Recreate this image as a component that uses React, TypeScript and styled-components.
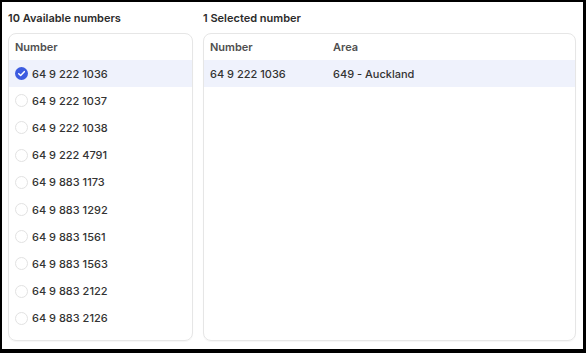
import styled, { createGlobalStyle } from "styled-components";

const GlobalStyle = createGlobalStyle`
  html, body {
    margin: 0;
    padding: 0;
    background: #ffffff;
  }
  body {
    font-family: Inter, "Noto Sans", sans-serif;
  }
`;

const available = [
  "64 9 222 1036",
  "64 9 222 1037",
  "64 9 222 1038",
  "64 9 222 4791",
  "64 9 883 1173",
  "64 9 883 1292",
  "64 9 883 1561",
  "64 9 883 1563",
  "64 9 883 2122",
  "64 9 883 2126",
];

const selected = [{ number: "64 9 222 1036", area: "649 - Auckland" }];

const Check = ({ checked }: { checked: boolean }) =>
  checked ? (
    <Tick viewBox="0 0 14 14">
      <circle cx="7" cy="7" r="7" fill="#3d5ce0" />
      <path d="M4 7.2 L6.1 9.2 L10 5" fill="none" stroke="#fff" strokeWidth="1.6" strokeLinecap="round" strokeLinejoin="round" />
    </Tick>
  ) : (
    <Radio />
  );

export default function App() {
  return (
    <>
      <GlobalStyle />
      <Frame>
        <Column $width="185px">
          <Title>{available.length} Available numbers</Title>
          <Card>
            <HeadRow>
              <HeadCell>Number</HeadCell>
            </HeadRow>
            {available.map((n, i) => (
              <Row key={n} $active={i === 0} $gap="4px">
                <Check checked={i === 0} />
                <Cell>{n}</Cell>
              </Row>
            ))}
          </Card>
        </Column>
        <Column $width="373px">
          <Title>{selected.length} Selected number</Title>
          <Card>
            <HeadRow>
              <HeadCell $width="123px">Number</HeadCell>
              <HeadCell>Area</HeadCell>
            </HeadRow>
            {selected.map((s) => (
              <Row key={s.number} $active>
                <Cell $width="123px">{s.number}</Cell>
                <Cell>{s.area}</Cell>
              </Row>
            ))}
          </Card>
        </Column>
      </Frame>
    </>
  );
}

const Frame = styled.div`
  width: 586px;
  height: 353px;
  box-sizing: border-box;
  border-style: solid;
  border-color: #000;
  border-width: 2px 3px 4px 2px;
  padding: 9px 7px 8px 6px;
  display: flex;
  gap: 10px;
`;

const Column = styled.div<{ $width: string }>`
  width: ${(p) => p.$width};
  display: flex;
  flex-direction: column;
  gap: 8px;
`;

const Title = styled.div`
  font-size: 11px;
  line-height: 14px;
  font-weight: 600;
  color: #2b2b2b;
`;

const Card = styled.div`
  flex: 1;
  border: 1px solid #e6e6e6;
  border-radius: 8px;
  overflow: hidden;
  box-shadow: 0 1px 1px rgba(0, 0, 0, 0.04);
`;

const HeadRow = styled.div`
  height: 26px;
  display: flex;
  align-items: center;
  padding: 0 6px;
`;

const HeadCell = styled.div<{ $width?: string }>`
  width: ${(p) => p.$width ?? "auto"};
  font-size: 11px;
  font-weight: 600;
  color: #4f4f4f;
`;

const Row = styled.div<{ $active?: boolean; $gap?: string }>`
  height: 27.2px;
  display: flex;
  align-items: center;
  gap: ${(p) => p.$gap ?? "0"};
  padding: 0 6px;
  background: ${(p) => (p.$active ? "#eff2fc" : "transparent")};
`;

const Cell = styled.div<{ $width?: string }>`
  width: ${(p) => p.$width ?? "auto"};
  font-size: 11px;
  font-weight: 500;
  color: #333333;
`;

const Tick = styled.svg`
  width: 13px;
  height: 13px;
  flex-shrink: 0;
`;

const Radio = styled.span`
  width: 13px;
  height: 13px;
  box-sizing: border-box;
  border: 1px solid #e2e2e2;
  border-radius: 50%;
  flex-shrink: 0;
`;
